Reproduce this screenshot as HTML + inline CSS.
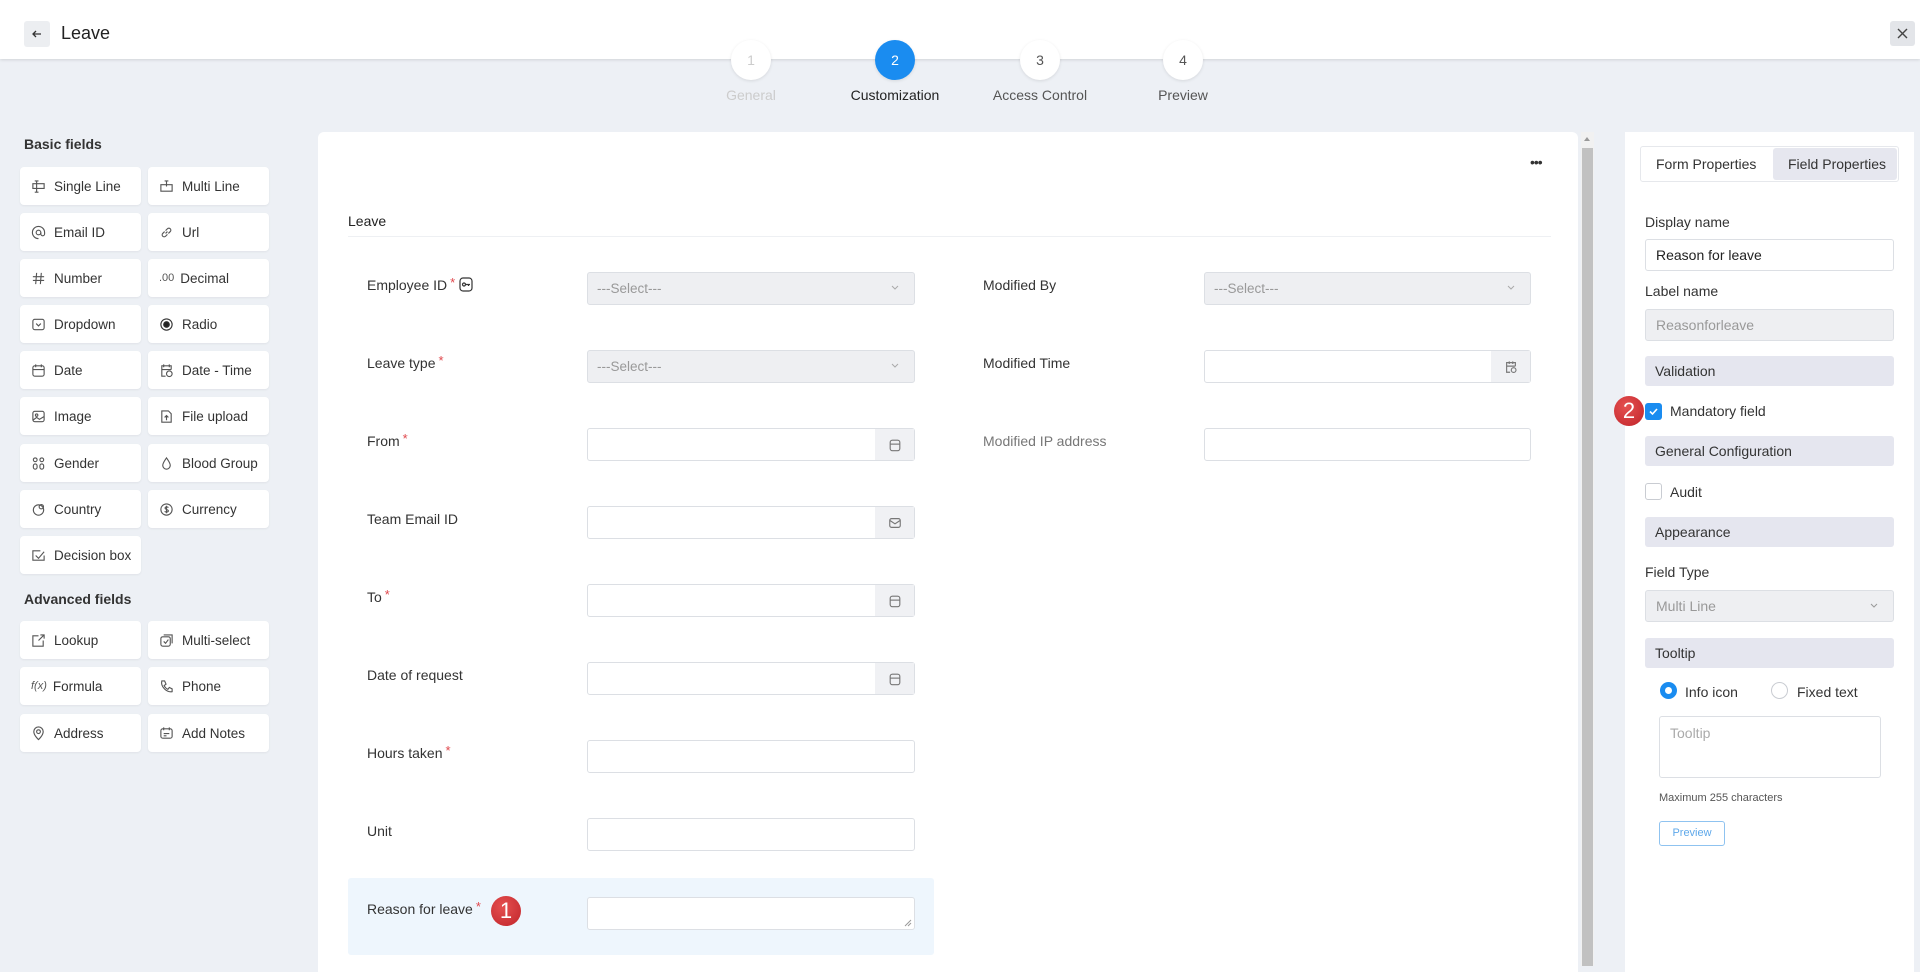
<!DOCTYPE html>
<html><head><meta charset="utf-8"><style>
*{box-sizing:border-box;margin:0;padding:0}
body{width:1920px;height:966px;overflow:hidden;background:#edf0f5;font-family:"Liberation Sans",sans-serif;color:#222;position:relative}
.a{position:absolute}
.hdr{left:0;top:0;width:1920px;height:59px;background:#fff;box-shadow:0 1px 3px rgba(0,0,0,.12)}
.step{width:40px;height:40px;border-radius:50%;background:#fff;text-align:center;line-height:40px;font-size:14px;color:#555;box-shadow:0 1px 3px rgba(0,0,0,.1)}
.slbl{font-size:14px;color:#555;text-align:center;width:160px}
.btn{width:121px;height:38px;background:#fff;border-radius:4px;box-shadow:0 1px 2px rgba(0,0,0,.06);font-size:13.5px;color:#333;display:flex;align-items:center;padding-left:11px}
.btn svg{width:15px;height:15px;margin-right:8px;flex:none}
.sec{font-size:14px;font-weight:bold;color:#333}
.lbl{font-size:14px;color:#333}
.req{color:#e0474c;font-size:13px;position:relative;top:-3px;margin-left:3px}
.inp{height:33px;border:1px solid #dcdfe4;border-radius:3px;background:#fff}
.dis{background:#eeeff2;color:#999;font-size:13.5px;padding-left:9px;line-height:31px}
.add{position:absolute;right:0;top:0;width:39px;height:31px;background:#f0f1f4;display:flex;align-items:center;justify-content:center}
.chev{position:absolute;right:14px;top:9px}
.bar{left:1645px;width:249px;height:30px;background:#e5e6ef;border-radius:3px;font-size:14px;color:#333;padding-left:10px;line-height:30px}
.rl{font-size:14px;color:#333}
.badge{width:30px;height:30px;border-radius:50%;background:radial-gradient(circle at 40% 35%,#e55050,#c0242a);color:#fff;font-size:22px;text-align:center;line-height:30px}
</style></head><body>
<div class="a hdr"></div>
<div class="a" style="left:24px;top:21px;width:26px;height:26px;background:#eceef1;border-radius:3px"><svg class="a" style="left:7px;top:7px" width="12" height="12" viewBox="0 0 12 12"><path d="M10 6H2M5 3L2 6l3 3" stroke="#333" stroke-width="1.3" fill="none"/></svg></div>
<div class="a" style="left:61px;top:23px;font-size:18px;color:#222">Leave</div>
<div class="a" style="left:1890px;top:21px;width:25px;height:25px;background:#e3e5e9;border-radius:3px"><svg class="a" style="left:7px;top:7px" width="11" height="11" viewBox="0 0 11 11"><path d="M1 1l9 9M10 1l-9 9" stroke="#444" stroke-width="1.4"/></svg></div>

<div class="a step" style="left:731px;top:40px;color:#ccc">1</div>
<div class="a step" style="left:875px;top:40px;background:#1a8cf0;color:#fff">2</div>
<div class="a step" style="left:1020px;top:40px">3</div>
<div class="a step" style="left:1163px;top:40px">4</div>
<div class="a slbl" style="left:671px;top:87px;color:#ccc">General</div>
<div class="a slbl" style="left:815px;top:87px;color:#222">Customization</div>
<div class="a slbl" style="left:960px;top:87px">Access Control</div>
<div class="a slbl" style="left:1103px;top:87px">Preview</div>

<div class="a sec" style="left:24px;top:136px">Basic fields</div>
<div class="a btn" style="left:20px;top:167px"><svg viewBox="0 0 16 16" fill="none" stroke="#555" stroke-width="1.2"><path d="M6 2v12M4 2h4M4 14h4M2 5h12v5H2z"/></svg>Single Line</div>
<div class="a btn" style="left:148px;top:167px"><svg viewBox="0 0 16 16" fill="none" stroke="#555" stroke-width="1.2"><path d="M2 6h12v7H2zM8 2v6M6 2h4"/></svg>Multi Line</div>
<div class="a btn" style="left:20px;top:213px"><svg viewBox="0 0 16 16" fill="none" stroke="#555" stroke-width="1.2"><circle cx="8" cy="8" r="2.5"/><path d="M10.5 8v1.5a2 2 0 004 0V8A6.5 6.5 0 108 14.5"/></svg>Email ID</div>
<div class="a btn" style="left:148px;top:213px"><svg viewBox="0 0 16 16" fill="none" stroke="#555" stroke-width="1.2"><path d="M7 9l2-2M6 7l-2 2a2 2 0 003 3l2-2M10 9l2-2a2 2 0 00-3-3L7 6"/></svg>Url</div>
<div class="a btn" style="left:20px;top:259px"><svg viewBox="0 0 16 16" fill="none" stroke="#555" stroke-width="1.2"><path d="M6 2L5 14M11 2l-1 12M2 6h12M2 10h12"/></svg>Number</div>
<div class="a btn" style="left:148px;top:259px"><span style="font-size:11px;color:#555;margin-right:6px">.00</span>Decimal</div>
<div class="a btn" style="left:20px;top:305px"><svg viewBox="0 0 16 16" fill="none" stroke="#555" stroke-width="1.2"><rect x="2" y="2.5" width="12" height="11" rx="2"/><path d="M5.5 7l2.5 2.5L10.5 7"/></svg>Dropdown</div>
<div class="a btn" style="left:148px;top:305px"><svg viewBox="0 0 16 16" fill="none" stroke="#333" stroke-width="1.2"><circle cx="8" cy="8" r="6"/><circle cx="8" cy="8" r="3" fill="#222"/></svg>Radio</div>
<div class="a btn" style="left:20px;top:351px"><svg viewBox="0 0 16 16" fill="none" stroke="#555" stroke-width="1.2"><rect x="2" y="3" width="12" height="11" rx="2"/><path d="M2 7h12M5 1.5v3M11 1.5v3"/></svg>Date</div>
<div class="a btn" style="left:148px;top:351px"><svg viewBox="0 0 16 16" fill="none" stroke="#555" stroke-width="1.2"><path d="M7 14H3V3h10v4M3 7h10M5 1.5v3M11 1.5v3"/><circle cx="11" cy="11.5" r="3"/></svg>Date - Time</div>
<div class="a btn" style="left:20px;top:397px"><svg viewBox="0 0 16 16" fill="none" stroke="#555" stroke-width="1.2"><rect x="2" y="2.5" width="12" height="11" rx="2"/><circle cx="6" cy="6.5" r="1.3"/><path d="M2 12l4-3 3 2 5-3"/></svg>Image</div>
<div class="a btn" style="left:148px;top:397px"><svg viewBox="0 0 16 16" fill="none" stroke="#555" stroke-width="1.2"><path d="M3 2h7l3 3v9H3zM8 12V7M6 9l2-2 2 2"/></svg>File upload</div>
<div class="a btn" style="left:20px;top:444px"><svg viewBox="0 0 16 16" fill="none" stroke="#555" stroke-width="1.2"><circle cx="4.5" cy="4" r="2"/><circle cx="11.5" cy="4" r="2"/><rect x="2.5" y="8.5" width="4" height="5.5" rx="2"/><rect x="9.5" y="8.5" width="4" height="5.5" rx="2"/></svg>Gender</div>
<div class="a btn" style="left:148px;top:444px"><svg viewBox="0 0 16 16" fill="none" stroke="#555" stroke-width="1.2"><path d="M8 2C6 5 4 7.5 4 10a4 4 0 008 0c0-2.5-2-5-4-8z"/></svg>Blood Group</div>
<div class="a btn" style="left:20px;top:490px"><svg viewBox="0 0 16 16" fill="none" stroke="#555" stroke-width="1.2"><circle cx="8" cy="8.5" r="5.5"/><circle cx="11" cy="5" r="2.3"/></svg>Country</div>
<div class="a btn" style="left:148px;top:490px"><svg viewBox="0 0 16 16" fill="none" stroke="#555" stroke-width="1.2"><circle cx="8" cy="8" r="6"/><path d="M10 6c-.5-1-3.5-1-3.5.5S10 8 10 9.5 7 11 6 10M8 4v8"/></svg>Currency</div>
<div class="a btn" style="left:20px;top:536px"><svg viewBox="0 0 16 16" fill="none" stroke="#555" stroke-width="1.2"><path d="M14 8v5H2V3h8M5 8l3 3 6-7"/></svg>Decision box</div>

<div class="a sec" style="left:24px;top:591px">Advanced fields</div>
<div class="a btn" style="left:20px;top:621px"><svg viewBox="0 0 16 16" fill="none" stroke="#555" stroke-width="1.2"><path d="M8 3H2v11h11V8M10 2h4v4M14 2L8 8"/></svg>Lookup</div>
<div class="a btn" style="left:148px;top:621px"><svg viewBox="0 0 16 16" fill="none" stroke="#555" stroke-width="1.2"><rect x="2" y="4" width="10" height="10" rx="2"/><path d="M5 2h9v9M5 9l2 2 3-4"/></svg>Multi-select</div>
<div class="a btn" style="left:20px;top:667px"><span style="font-size:11px;color:#555;margin-right:6px;font-style:italic">f(x)</span>Formula</div>
<div class="a btn" style="left:148px;top:667px"><svg viewBox="0 0 16 16" fill="none" stroke="#555" stroke-width="1.2"><path d="M3 2h3l1.5 3.5-2 1.5a8 8 0 004 4l1.5-2L14 10.5v3c-6 1-12.5-5.5-11-11.5z"/></svg>Phone</div>
<div class="a btn" style="left:20px;top:714px"><svg viewBox="0 0 16 16" fill="none" stroke="#555" stroke-width="1.2"><path d="M8 14.5s5-4.5 5-8.5a5 5 0 00-10 0c0 4 5 8.5 5 8.5z"/><circle cx="8" cy="6" r="2"/></svg>Address</div>
<div class="a btn" style="left:148px;top:714px"><svg viewBox="0 0 16 16" fill="none" stroke="#555" stroke-width="1.2"><rect x="2" y="3" width="12" height="10" rx="2"/><path d="M5 1.5v3M11 1.5v3M5 8h6M5 10.5h3"/></svg>Add Notes</div>

<!-- center -->
<div class="a" style="left:318px;top:132px;width:1260px;height:840px;background:#fff;border-radius:6px 6px 0 0"></div>
<div class="a" style="left:1581px;top:132px;width:13px;height:834px;background:#f1f1f1"></div>
<div class="a" style="left:1582px;top:148px;width:11px;height:818px;background:#c1c1c1"></div>
<div class="a" style="left:1584px;top:137px;width:0;height:0;border-left:3px solid transparent;border-right:3px solid transparent;border-bottom:4px solid #999"></div>
<div class="a" style="left:1530px;top:154px;font-size:14px;color:#333;letter-spacing:-1px">•••</div>
<div class="a" style="left:348px;top:213px;font-size:14px;color:#222">Leave</div>
<div class="a" style="left:348px;top:236px;width:1203px;height:1px;background:#eef0f3"></div>
<div class="a" style="left:348px;top:878px;width:586px;height:77px;background:#eef6fd;border-radius:3px"></div>

<div class="a lbl" style="left:367px;top:277px">Employee ID<span class="req">*</span> <svg style="vertical-align:-2px" width="14" height="15" viewBox="0 0 14 15" fill="none" stroke="#333" stroke-width="1.2"><rect x="1" y="1" width="12" height="13" rx="3"/><circle cx="5" cy="7.5" r="1.5"/><path d="M6.5 7.5H11M9.5 7.5v1.5"/></svg></div>
<div class="a lbl" style="left:367px;top:355px">Leave type<span class="req">*</span></div>
<div class="a lbl" style="left:367px;top:433px">From<span class="req">*</span></div>
<div class="a lbl" style="left:367px;top:511px">Team Email ID</div>
<div class="a lbl" style="left:367px;top:589px">To<span class="req">*</span></div>
<div class="a lbl" style="left:367px;top:667px">Date of request</div>
<div class="a lbl" style="left:367px;top:745px">Hours taken<span class="req">*</span></div>
<div class="a lbl" style="left:367px;top:823px">Unit</div>
<div class="a lbl" style="left:367px;top:901px">Reason for leave<span class="req">*</span></div>
<div class="a badge" style="left:491px;top:896px">1</div>

<div class="a inp dis" style="left:587px;top:272px;width:328px">---Select---<svg class="chev" width="10" height="10" viewBox="0 0 10 10"><path d="M2 4l3 3 3-3" stroke="#aaa" fill="none"/></svg></div>
<div class="a inp dis" style="left:587px;top:350px;width:328px">---Select---<svg class="chev" width="10" height="10" viewBox="0 0 10 10"><path d="M2 4l3 3 3-3" stroke="#aaa" fill="none"/></svg></div>
<div class="a inp" style="left:587px;top:428px;width:328px"><div class="add"><svg width="14" height="14" viewBox="0 0 16 16" fill="none" stroke="#777" stroke-width="1.3"><rect x="2.5" y="2.5" width="11" height="12" rx="2.5"/><path d="M2.5 7h11"/></svg></div></div>
<div class="a inp" style="left:587px;top:506px;width:328px"><div class="add"><svg width="14" height="14" viewBox="0 0 16 16" fill="none" stroke="#777" stroke-width="1.3"><rect x="2" y="3" width="12" height="10" rx="2"/><path d="M2 5l6 4 6-4"/></svg></div></div>
<div class="a inp" style="left:587px;top:584px;width:328px"><div class="add"><svg width="14" height="14" viewBox="0 0 16 16" fill="none" stroke="#777" stroke-width="1.3"><rect x="2.5" y="2.5" width="11" height="12" rx="2.5"/><path d="M2.5 7h11"/></svg></div></div>
<div class="a inp" style="left:587px;top:662px;width:328px"><div class="add"><svg width="14" height="14" viewBox="0 0 16 16" fill="none" stroke="#777" stroke-width="1.3"><rect x="2.5" y="2.5" width="11" height="12" rx="2.5"/><path d="M2.5 7h11"/></svg></div></div>
<div class="a inp" style="left:587px;top:740px;width:328px"></div>
<div class="a inp" style="left:587px;top:818px;width:328px"></div>
<div class="a inp" style="left:587px;top:897px;width:328px"><svg class="a" style="right:2px;bottom:2px" width="8" height="8" viewBox="0 0 8 8"><path d="M7 1L1 7M7 4L4 7" stroke="#999"/></svg></div>

<div class="a lbl" style="left:983px;top:277px">Modified By</div>
<div class="a lbl" style="left:983px;top:355px">Modified Time</div>
<div class="a lbl" style="left:983px;top:433px;color:#777">Modified IP address</div>
<div class="a inp dis" style="left:1204px;top:272px;width:327px">---Select---<svg class="chev" width="10" height="10" viewBox="0 0 10 10"><path d="M2 4l3 3 3-3" stroke="#aaa" fill="none"/></svg></div>
<div class="a inp" style="left:1204px;top:350px;width:327px"><div class="add"><svg width="14" height="14" viewBox="0 0 16 16" fill="none" stroke="#777" stroke-width="1.3"><path d="M7 14H3V3h10v4M3 7h10M6 1.5v3M10 1.5v3"/><circle cx="11" cy="11.5" r="2.7"/></svg></div></div>
<div class="a inp" style="left:1204px;top:428px;width:327px"></div>

<!-- right -->
<div class="a" style="left:1625px;top:132px;width:289px;height:840px;background:#fff"></div>
<div class="a" style="left:1640px;top:146px;width:259px;height:36px;border:1px solid #e6e8ec;border-radius:3px"></div>
<div class="a" style="left:1773px;top:148px;width:124px;height:32px;background:#e6e7ef;border-radius:3px"></div>
<div class="a" style="left:1656px;top:156px;font-size:14px;color:#333">Form Properties</div>
<div class="a" style="left:1788px;top:156px;font-size:14px;color:#333">Field Properties</div>
<div class="a rl" style="left:1645px;top:214px">Display name</div>
<div class="a inp" style="left:1645px;top:239px;width:249px;height:32px;font-size:14px;padding-left:10px;line-height:30px">Reason for leave</div>
<div class="a rl" style="left:1645px;top:283px">Label name</div>
<div class="a inp dis" style="left:1645px;top:309px;width:249px;height:32px;font-size:14px;padding-left:10px;line-height:30px">Reasonforleave</div>
<div class="a bar" style="top:356px">Validation</div>
<div class="a" style="left:1645px;top:403px;width:17px;height:17px;background:#1a8cf0;border-radius:3px"><svg class="a" style="left:3px;top:3px" width="11" height="11" viewBox="0 0 11 11"><path d="M2 5.5l2.5 2.5L9 3" stroke="#fff" stroke-width="1.6" fill="none"/></svg></div>
<div class="a badge" style="left:1614px;top:396px">2</div>
<div class="a rl" style="left:1670px;top:403px">Mandatory field</div>
<div class="a bar" style="top:436px">General Configuration</div>
<div class="a" style="left:1645px;top:483px;width:17px;height:17px;border:1px solid #c9ccd2;border-radius:3px"></div>
<div class="a rl" style="left:1670px;top:484px">Audit</div>
<div class="a bar" style="top:517px">Appearance</div>
<div class="a rl" style="left:1645px;top:564px">Field Type</div>
<div class="a inp dis" style="left:1645px;top:590px;width:249px;height:32px;font-size:14px;padding-left:10px;line-height:30px">Multi Line<svg class="chev" width="10" height="10" viewBox="0 0 10 10"><path d="M2 4l3 3 3-3" stroke="#999" fill="none"/></svg></div>
<div class="a bar" style="top:638px">Tooltip</div>
<div class="a" style="left:1660px;top:682px;width:17px;height:17px;border-radius:50%;border:5px solid #1a8cf0;background:#fff"></div>
<div class="a rl" style="left:1685px;top:684px">Info icon</div>
<div class="a" style="left:1771px;top:682px;width:17px;height:17px;border-radius:50%;border:1px solid #c9ccd2"></div>
<div class="a rl" style="left:1797px;top:684px">Fixed text</div>
<div class="a" style="left:1659px;top:716px;width:222px;height:62px;border:1px solid #dcdfe4;border-radius:3px;font-size:14px;color:#aaa;padding:8px 10px">Tooltip</div>
<div class="a" style="left:1659px;top:792px;font-size:11px;color:#555">Maximum 255 characters</div>
<div class="a" style="left:1659px;top:821px;width:66px;height:25px;border:1px solid #8fc3f0;border-radius:3px;font-size:11px;color:#5ea8ea;text-align:center;line-height:23px">Preview</div>
</body></html>
